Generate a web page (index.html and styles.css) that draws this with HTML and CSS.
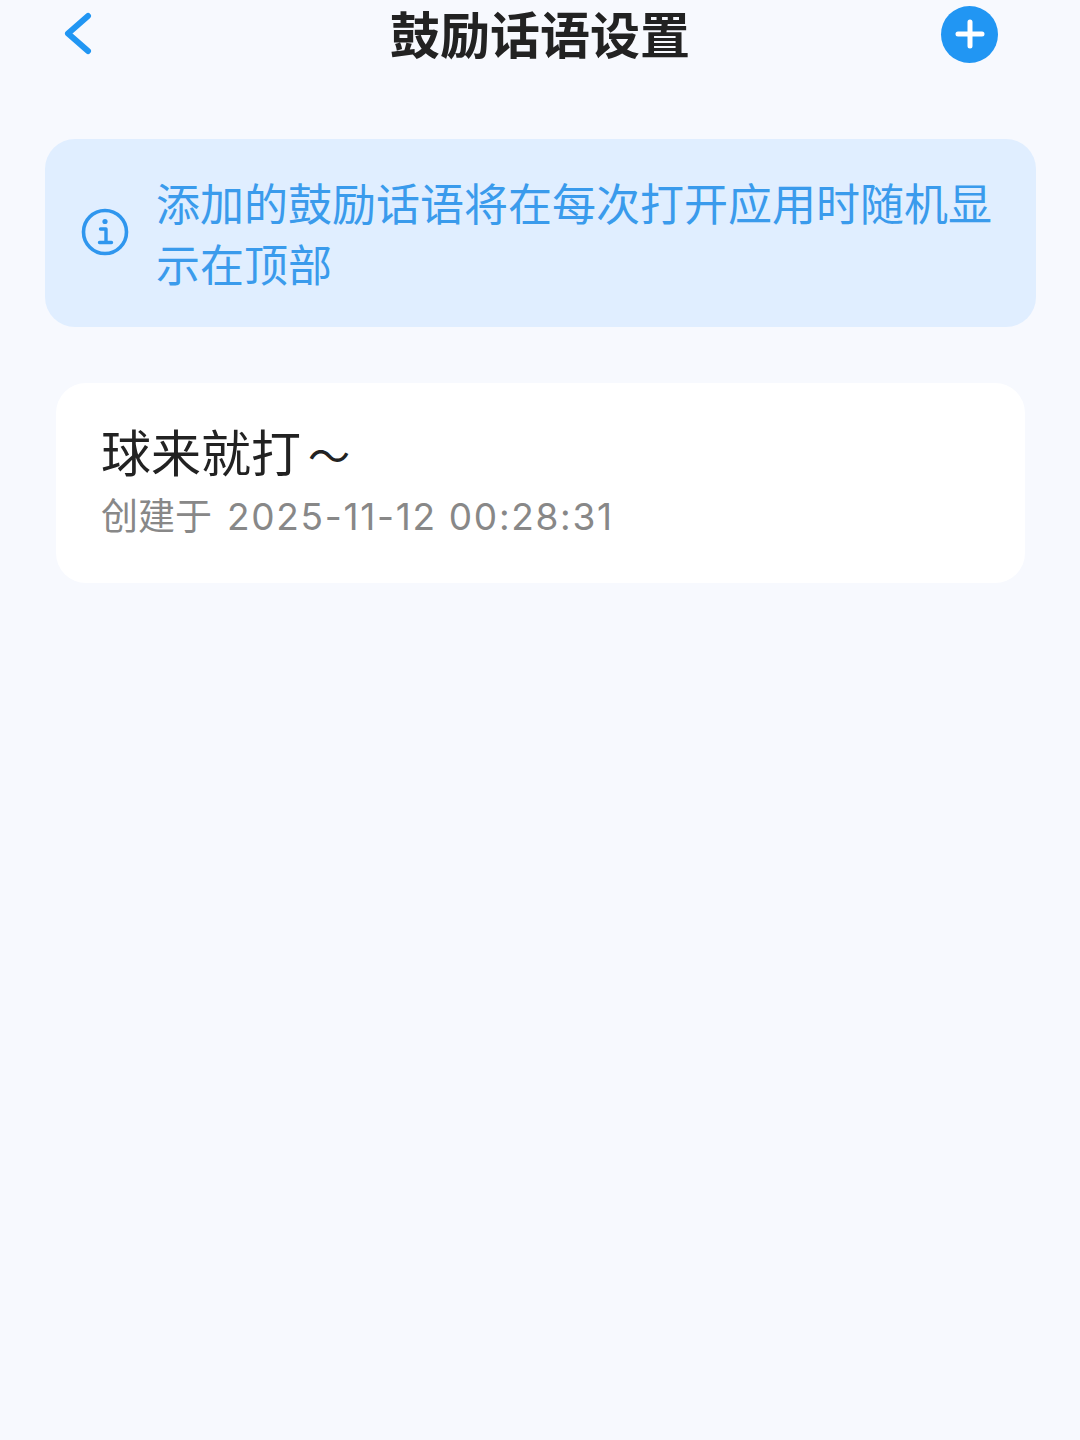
FILE: index.html
```html
<!DOCTYPE html>
<html lang="zh-CN">
<head>
    <meta charset="UTF-8">
    <meta name="viewport" content="width=device-width, initial-scale=1.0">
    <title>鼓励话语设置</title>
    <link rel="stylesheet" href="styles.css">
</head>
<body>

    <div class="header">
        <a class="back" href="#">
            <svg width="28" height="44" viewBox="0 0 28 44" fill="none" stroke="#2196f3" stroke-width="6" stroke-linecap="round" stroke-linejoin="round">
                <path d="M24 4 L4 21.5 L24 39"/>
            </svg>
        </a>
        <h1>鼓励话语设置</h1>
        <button class="add" type="button">
            <svg width="30" height="30" viewBox="0 0 30 30" fill="none" stroke="white" stroke-width="5" stroke-linecap="round">
                <path d="M15 3 V27 M3 15 H27"/>
            </svg>
        </button>
    </div>

    <div class="notice">
        <svg class="notice-icon" width="48" height="48" viewBox="0 0 48 48" fill="none" stroke="#2f96ee">
            <circle cx="24" cy="24" r="21.5" stroke-width="3.6"/>
            <circle cx="24" cy="13.5" r="2.6" fill="#2f96ee" stroke="none"/>
            <path d="M19.5 21 H25 V34 M18.5 34.5 H30.5" stroke-width="3.4" stroke-linecap="round" stroke-linejoin="round"/>
        </svg>
        <p>添加的鼓励话语将在每次打开应用时随机显示在顶部</p>
    </div>

    <div class="card">
        <div class="card-title">球来就打<span class="tilde">～</span></div>
        <div class="card-time">创建于<span class="card-date">2025-11-12 00:28:31</span></div>
    </div>

</body>
</html>
```

FILE: styles.css
```css
body {
    margin: 0;
    height: 1440px;
    overflow: hidden;
    background-color: #f7f9fe;
    font-family: Roboto, "Noto Sans CJK SC", sans-serif;
}

.header {
    display: flex;
    align-items: center;
    justify-content: space-between;
    height: 68px;
    padding: 0 82px;
}

.header h1 {
    margin: 0 0 4px;
    font-size: 50px;
    font-weight: 700;
    color: #222;
}

.back {
    display: flex;
    width: 57px;
    margin-left: -18px;
    margin-right: 18px;
}

.add {
    display: flex;
    align-items: center;
    justify-content: center;
    width: 57px;
    height: 57px;
    padding: 0;
    border: none;
    border-radius: 50%;
    background-color: #2196f3;
}

.notice {
    display: flex;
    align-items: center;
    gap: 27px;
    margin: 71px 44px 0 45px;
    padding: 37px 39px 29px 36px;
    background-color: #e0eeff;
    border-radius: 30px;
}

.notice-icon {
    flex-shrink: 0;
    margin-bottom: 10px;
}

.notice p {
    margin: 0;
    font-size: 44px;
    line-height: 61px;
    color: #3a9bec;
}

.card {
    margin: 56px 55px 0 56px;
    padding: 39px 45px 40px;
    background-color: white;
    border-radius: 30px;
}

.card-title {
    font-size: 50px;
    line-height: 66px;
    color: #222;
}

.tilde {
    margin-left: 7px;
    font-size: 42px;
}

.card-time {
    margin-top: 1px;
    font-size: 37px;
    line-height: 50px;
    color: #888;
}

.card-date {
    margin-left: 15px;
    font-family: Inter, sans-serif;
    letter-spacing: 1.7px;
}
```
